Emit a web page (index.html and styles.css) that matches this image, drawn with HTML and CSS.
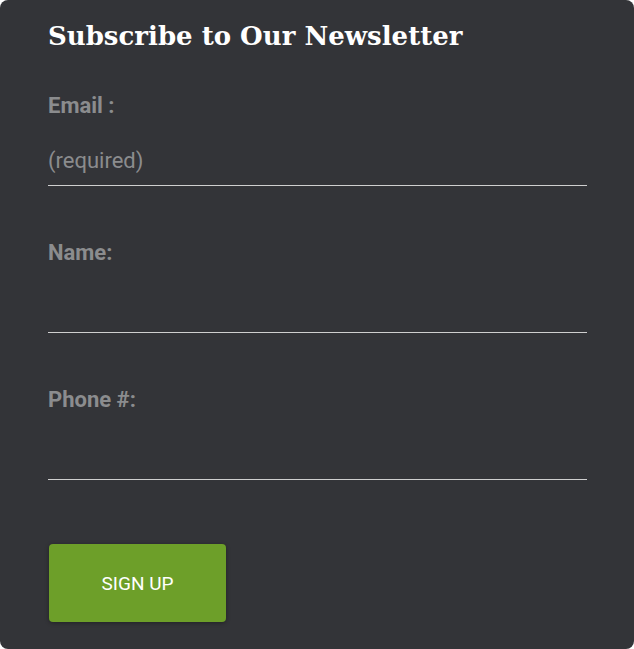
FILE: index.html
```html
<!DOCTYPE html>
<html>
<head>
<meta charset="utf-8">
<link rel="stylesheet" href="styles.css">
</head>
<body>
<div class="panel">
  <h1 class="title">Subscribe to Our Newsletter</h1>
  <form class="form">
    <div class="field">
      <label class="label">Email :</label>
      <input class="input" type="text" placeholder="(required)">
    </div>
    <div class="field">
      <label class="label">Name:</label>
      <input class="input" type="text">
    </div>
    <div class="field">
      <label class="label">Phone #:</label>
      <input class="input" type="text">
    </div>
    <button class="btn" type="button">SIGN UP</button>
  </form>
</div>
</body>
</html>
```

FILE: styles.css
```css
html, body {
  margin: 0;
  padding: 0;
  background: #ffffff;
}
.panel {
  box-sizing: border-box;
  width: 634px;
  height: 649px;
  background: #333438;
  border-radius: 8px;
  padding: 16px 47px 0 48px;
  font-family: Roboto, "Liberation Sans", sans-serif;
}
.title {
  margin: 0;
  font-family: "DejaVu Serif", Georgia, serif;
  font-weight: bold;
  font-size: 26px;
  line-height: 40px;
  color: #ffffff;
}
.form {
  display: flex;
  flex-direction: column;
  margin-top: 38px;
}
.field {
  display: flex;
  flex-direction: column;
  margin-bottom: 55px;
}
.label {
  display: block;
  font-weight: bold;
  font-size: 22px;
  line-height: 24px;
  color: #8b8c8e;
  margin-bottom: 18px;
}
.input {
  box-sizing: border-box;
  height: 50px;
  background: transparent;
  border: none;
  border-bottom: 1px solid #cfcfcf;
  padding: 0;
  font-family: Roboto, "Liberation Sans", sans-serif;
  font-size: 22px;
  color: #cccccc;
  outline: none;
}
.input::placeholder {
  color: #8b8c8e;
}
.btn {
  align-self: flex-start;
  margin-top: 9px;
  margin-left: 1px;
  width: 177px;
  height: 78px;
  background: #6d9f29;
  border: none;
  border-radius: 4px;
  color: #ffffff;
  font-family: Roboto, "Liberation Sans", sans-serif;
  font-size: 19px;
  box-shadow: 0 1px 4px rgba(0,0,0,0.35);
  cursor: pointer;
}
```
